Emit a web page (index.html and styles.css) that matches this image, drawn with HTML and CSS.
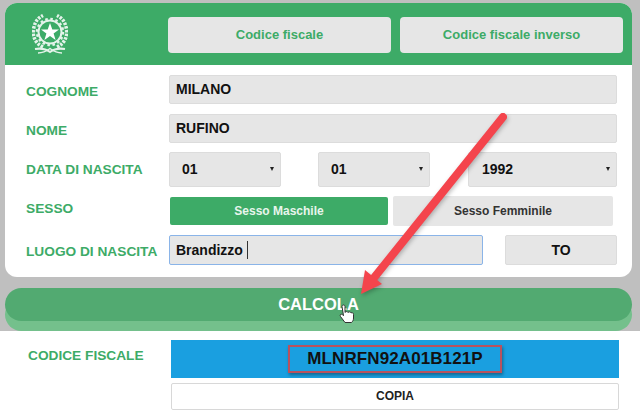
FILE: index.html
```html
<!DOCTYPE html>
<html lang="it">
  <head>
    <meta charset="utf-8">
    <title>Codice fiscale</title>
    <link rel="stylesheet" href="styles.css">
  </head>
  <body>
    <div class="top_area">
      <div class="card">
        <header class="card_head">
          <svg class="emblem" viewBox="0 0 36 42" width="36" height="42">
            <g fill="none" stroke="#e4f3ea">
              <path stroke-width="3.500" stroke-dasharray="2.500 1.200" d="M11 34C3 30 0 23 1.800 15C2.800 9 6 5 11 2.500"/>
              <path stroke-width="3.500" stroke-dasharray="2.500 1.200" d="M25 34C33 30 36 23 34.200 15C33.200 9 30 5 25 2.500"/>
              <path stroke-width="2" d="M3 36C9 35 14 36 18 39C22 36 27 35 33 36"/>
              <path stroke-width="1.500" d="M6 40C10 40 14 38.500 18 35.500C22 38.500 26 40 30 40"/>
              <circle cx="18" cy="19" r="11.500" stroke-width="2"/>
              <circle cx="18" cy="19" r="13" stroke-width="2.500" stroke-dasharray="2.500 2.600"/>
            </g>
            <path fill="#fff" d="M18 10l2.300 6.400h6.700l-5.400 4 2 6.600-5.600-4-5.600 4 2-6.600-5.400-4h6.700z"/>
          </svg>
          <div class="tab">Codice fiscale</div>
          <div class="tab">Codice fiscale inverso</div>
        </header>
        <form class="card_form">
          <div class="row row_text">
            <label class="lbl lbl_low">COGNOME</label>
            <input class="field" type="text" value="MILANO">
          </div>
          <div class="row row_text">
            <label class="lbl lbl_low">NOME</label>
            <input class="field" type="text" value="RUFINO">
          </div>
          <div class="row row_date">
            <label class="lbl">DATA DI NASCITA</label>
            <div class="date_selects">
              <div class="sel sel_short">01<span class="caret"></span></div>
              <div class="sel sel_short">01<span class="caret"></span></div>
              <div class="sel sel_long">1992<span class="caret"></span></div>
            </div>
          </div>
          <div class="row row_sex">
            <label class="lbl lbl_high">SESSO</label>
            <div class="sex_btns">
              <div class="sex_btn sex_on">Sesso Maschile</div>
              <div class="sex_btn">Sesso Femminile</div>
            </div>
          </div>
          <div class="row row_place">
            <label class="lbl lbl_low">LUOGO DI NASCITA</label>
            <div class="place_box">Brandizzo<span class="text_caret"></span></div>
            <div class="prov">TO</div>
          </div>
        </form>
      </div>
      <div class="calc_btn">CALCOLA</div>
    </div>

    <section class="result">
      <div class="result_label">CODICE FISCALE</div>
      <div class="result_col">
        <div class="code_box"><span class="code_mark">MLNRFN92A01B121P</span></div>
        <div class="copy_btn">COPIA</div>
      </div>
    </section>

    <!-- annotations drawn on top of the screenshot -->
    <svg class="overlay" viewBox="0 0 640 416" width="640" height="416">
      <g class="arrow">
        <path fill="none" stroke="#f4444c" stroke-width="8" stroke-linecap="round" d="M503 117L373 279"/>
        <path fill="#f4444c" d="M361 294L365 270L382 284z"/>
      </g>
      <path fill="#fff" stroke="#333" stroke-width="1" stroke-linejoin="round" d="M342 306.500c0-2 3-2 3 0v6c1-1.500 2.500-1 3 0c1-1 2.500-.8 3 .4c1.200-.6 2.500 0 2.500 1.500v3.600c0 2.500-1 3.500-2 4.500h-6.500l-4.500-6c-1.200-1.800 .8-3 2-1.800l1 1z"/>
    </svg>
  </body>
</html>
```

FILE: styles.css
```css
html, body {
  margin:0;
  padding:0;
}
body {
  font-family: "Liberation Sans", Arial, sans-serif;
  font-weight:bold;
  background-color:#fff;
  position:relative;
  width:640px;
  height:416px;
  overflow:hidden;
}

.top_area {
  background-color:#bfbfbf;
  height:331px;
  padding:3px 8px 0 5px;
  box-sizing:border-box;
}
.card {
  background-color:#fff;
  height:274px;
  border-radius:12px;
  overflow:hidden;
}

/* green head with the two tabs */
.card_head {
  background-color:#3dab67;
  height:62px;
  display:flex;
  align-items:flex-start;
  padding-top:14px;
  box-sizing:border-box;
}
.emblem {
  margin:-4px 0 0 27px;
  flex-shrink:0;
}
.tab {
  width:223px;
  height:36px;
  line-height:36px;
  margin-left:9px;
  background-color:#e6e6e6;
  border-radius:4px;
  color:#3dab67;
  font-size:13px;
  text-align:center;
}
.emblem + .tab {
  margin-left:100px;
}

.card_form {
  padding:10px 15px 0 21px;
}
.row {
  display:flex;
  align-items:center;
}
.row_text {
  height:29px;
  margin-bottom:10px;
}
.row_text + .row_text {
  margin-bottom:9px;
}
.row_date {
  height:35px;
  margin-bottom:9px;
}
.row_sex {
  height:30px;
  margin-bottom:9px;
}
.row_place {
  height:30px;
}
.lbl {
  width:143px;
  flex-shrink:0;
  color:#3dab67;
  font-size:13.700px;
}
.lbl_low {
  padding-top:3px;
}
.lbl_high {
  padding-bottom:6px;
}

.field, .place_box, .sel, .prov {
  background-color:#e6e6e6;
  border:1px solid #dcdcdc;
  border-radius:2px;
  box-sizing:border-box;
  color:#111;
  font-family:inherit;
  font-weight:bold;
  font-size:14px;
}
.field {
  flex-grow:1;
  height:29px;
  padding:0 6px 1px;
  outline:none;
}

.date_selects {
  flex-grow:1;
  display:flex;
  gap:37px;
}
.sel {
  height:35px;
  display:flex;
  align-items:center;
  justify-content:space-between;
  padding:0 6px 2px 12px;
}
.sel_short {
  width:112px;
}
.sel_long {
  width:149px;
  margin-left:1px;
  padding-left:13px;
}
.caret {
  border-left:2.500px solid transparent;
  border-right:2.500px solid transparent;
  border-top:4px solid #222;
}

.sex_btns {
  display:flex;
  align-items:center;
}
.sex_btn {
  width:220px;
  height:30px;
  line-height:30px;
  margin-left:5px;
  background-color:#e6e6e6;
  border-radius:2px;
  color:#333;
  font-size:12px;
  text-align:center;
}
.sex_on {
  width:218px;
  height:28px;
  line-height:28px;
  margin-left:1px;
  background-color:#3dab67;
  color:#e8f5ed;
}

.place_box {
  width:314px;
  height:30px;
  line-height:28px;
  padding:0 6px;
  border-color:#8ab4e8;
}
.text_caret {
  display:inline-block;
  width:1px;
  height:18px;
  margin-left:4px;
  vertical-align:-4px;
  background-color:#333;
}
.prov {
  width:112px;
  height:30px;
  line-height:28px;
  margin-left:22px;
  text-align:center;
}

.calc_btn {
  height:33px;
  line-height:33px;
  margin-top:11px;
  border-radius:20px;
  background-color:#52aa71;
  box-shadow:0 10px 0 #74c08c;
  color:#fff;
  font-size:16.500px;
  text-align:center;
}

.result {
  display:flex;
  align-items:flex-start;
  padding:9px 21px 0 28px;
}
.result_label {
  width:143px;
  flex-shrink:0;
  padding-top:8px;
  color:#3dab67;
  font-size:13.700px;
}
.result_col {
  flex-grow:1;
}
.code_box {
  height:38px;
  display:flex;
  align-items:center;
  justify-content:center;
  background-color:#1a9fe0;
}
.code_mark {
  width:214px;
  height:28px;
  line-height:24px;
  box-sizing:border-box;
  border:2px solid #b9525e;
  box-shadow:1px 2px 3px rgba(0, 0, 0, 0.35);
  color:#111;
  font-size:17px;
  letter-spacing:0.100px;
  text-align:center;
}
.copy_btn {
  height:27px;
  line-height:25px;
  margin-top:5px;
  box-sizing:border-box;
  border:1px solid #d8d8d8;
  border-radius:2px;
  color:#222;
  font-size:12px;
  text-align:center;
}

.overlay {
  position:absolute;
  top:0;
  left:0;
}
.arrow {
  filter:drop-shadow(1px 2px 2px rgba(0, 0, 0, 0.25));
}
```
